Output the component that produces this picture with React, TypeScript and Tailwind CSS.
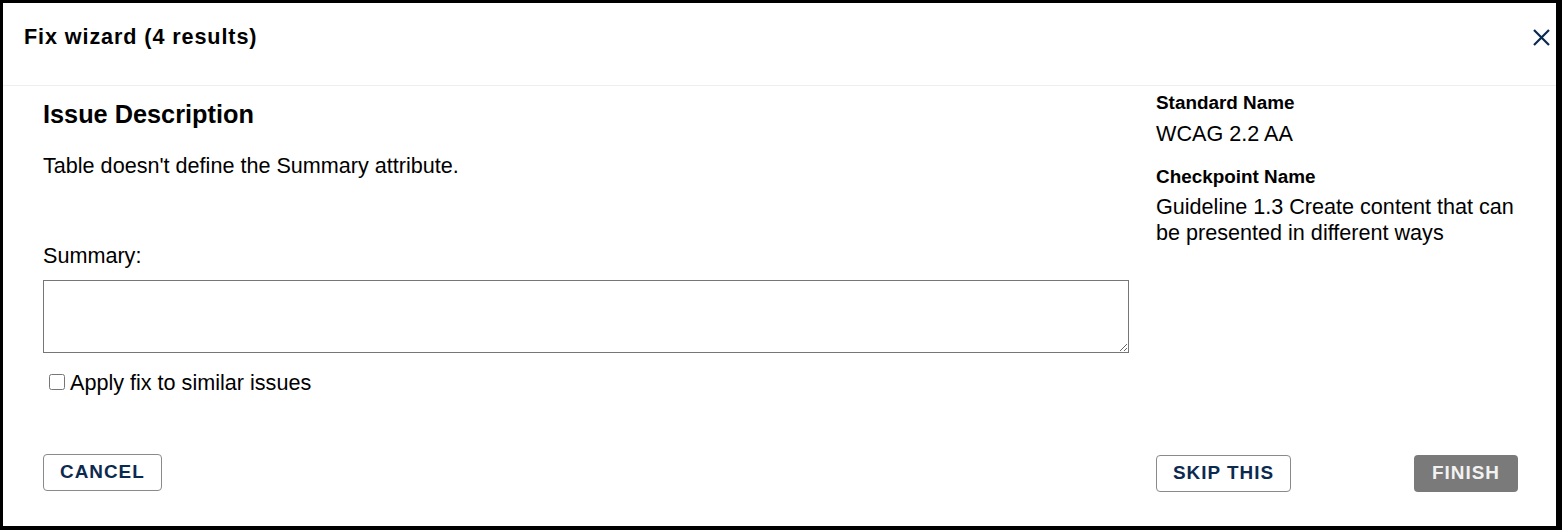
export default function App() {
  return (
    <div className="w-[1562px] h-[530px] bg-black pt-[3px] pl-[3px] font-['Liberation_Sans',Arial,sans-serif] text-black">
      <div className="w-[1553px] h-[523px] bg-white flex flex-col">
        {/* header */}
        <div className="h-[83px] border-b border-[#eeeeee] flex items-start justify-between pl-[21px] pr-[6px]">
          <h1 className="mt-[21px] text-[21.6px] leading-[26px] font-bold tracking-[0.9px]">Fix wizard (4 results)</h1>
          <button className="mt-[26px] w-[17px] h-[17px]" aria-label="Close">
            <svg viewBox="0 0 17 17" className="w-[17px] h-[17px]" fill="none" stroke="#0b2a50" strokeWidth="2.2">
              <path d="M1 1 L16 16 M16 1 L1 16" />
            </svg>
          </button>
        </div>

        {/* body */}
        <div className="flex flex-1 pl-10 pr-[38px]">
          <div className="w-[1086px] flex flex-col">
            <h2 className="mt-[13px] text-[25.3px] leading-[30px] font-bold">Issue Description</h2>
            <p className="mt-[24px] text-[21.6px] leading-[26px]">Table doesn't define the Summary attribute.</p>
            <label className="mt-[64px] text-[21.6px] leading-[26px]">Summary:</label>
            <textarea className="mt-[11px] h-[73px] w-full border border-[#767676] resize-y outline-none" />
            <label className="mt-[17px] flex items-start gap-[5px] text-[21.6px] leading-[26px] pl-[6px]">
              <input type="checkbox" className="mt-[4px] w-[16px] h-[16px] m-0" />
              <span>Apply fix to similar issues</span>
            </label>
            <div className="mt-[58px]">
              <button className="h-[37px] px-[16px] rounded-[4px] border border-[#8a8a8a] bg-white text-[#0b2a50] text-[18.9px] font-bold tracking-[1px]">
                CANCEL
              </button>
            </div>
          </div>

          <div className="ml-[27px] w-[362px] flex flex-col">
            <div className="mt-[6px] text-[18.9px] leading-[22px] font-bold">Standard Name</div>
            <div className="mt-[7px] text-[21.6px] leading-[26px]">WCAG 2.2 AA</div>
            <div className="mt-[19px] text-[18.9px] leading-[22px] font-bold">Checkpoint Name</div>
            <div className="mt-[6px] text-[21.6px] leading-[26px]">
              Guideline 1.3 Create content that can be presented in different ways
            </div>
            <div className="mt-auto mb-[34px] flex justify-between">
              <button className="h-[37px] px-[16px] rounded-[4px] border border-[#8a8a8a] bg-white text-[#0b2a50] text-[18.9px] font-bold tracking-[1px]">
                SKIP THIS
              </button>
              <button className="h-[37px] px-[18px] rounded-[4px] bg-[#7a7a7a] text-[#f2f2f2] text-[18.9px] font-bold tracking-[1px]">
                FINISH
              </button>
            </div>
          </div>
        </div>
      </div>
    </div>
  );
}
